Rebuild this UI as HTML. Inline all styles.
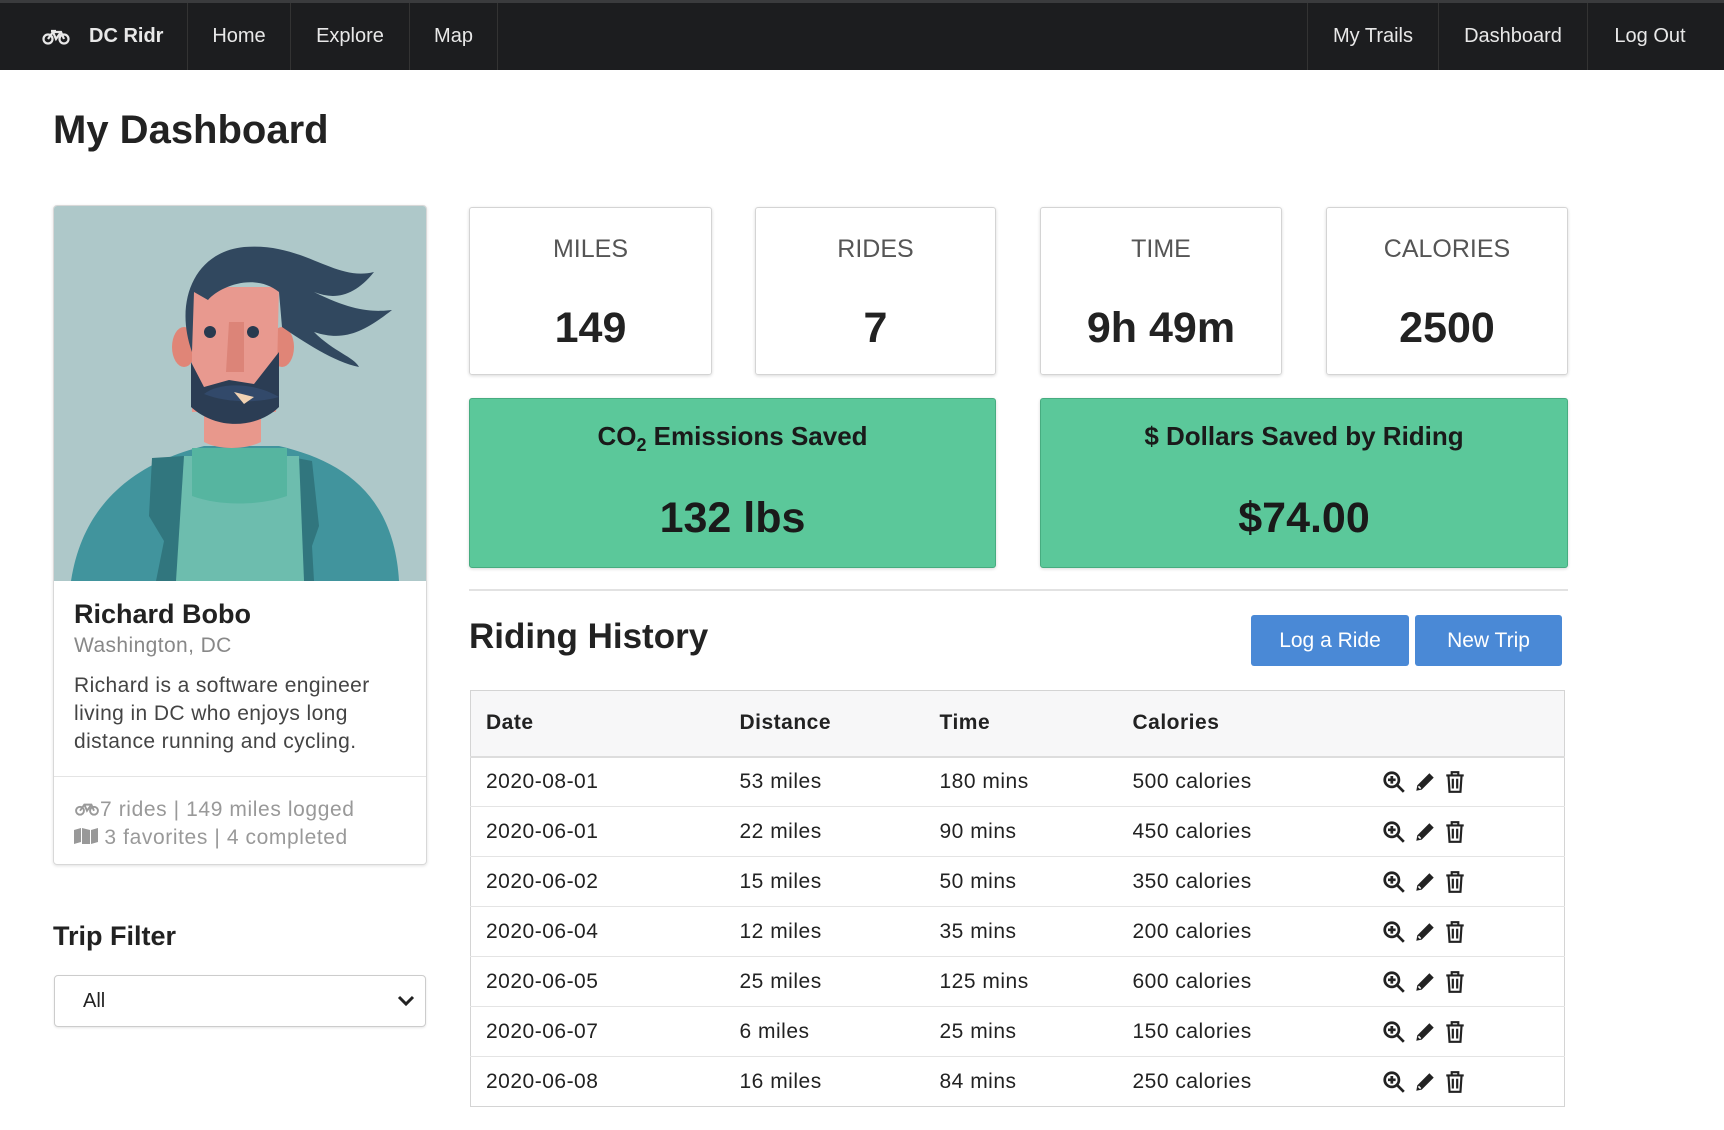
<!DOCTYPE html>
<html><head><meta charset="utf-8"><style>
*{box-sizing:border-box;margin:0;padding:0}
body{width:1724px;height:1130px;overflow:hidden;background:#fff;font-family:"Liberation Sans",sans-serif;color:#222;position:relative}
.nav{position:absolute;left:0;top:0;width:1724px;height:70px;background:#1c1d1f;border-top:3px solid #3a3b3d}
.nav .it{position:absolute;top:0;height:67px;line-height:67px;color:#e8e8e8;font-size:20px;text-align:center;border-left:1px solid #333}
.a{position:absolute}
.card{position:absolute;left:53px;top:205px;width:374px;height:660px;border:1px solid #d8d8d8;border-radius:4px;overflow:hidden;box-shadow:0 1px 3px rgba(0,0,0,.12)}
.stat{position:absolute;top:207px;height:168px;border:1px solid #d4d4d4;border-radius:3px;box-shadow:0 1px 3px rgba(0,0,0,.15);text-align:center}
.stat .l{position:absolute;top:27px;width:100%;font-size:25px;color:#555}
.stat .n{position:absolute;top:96px;width:100%;font-size:43px;font-weight:bold;color:#222}
.green{position:absolute;top:398px;height:170px;background:#5bc89a;border:1px solid #47ac80;border-radius:3px;text-align:center;box-shadow:0 1px 3px rgba(0,0,0,.15)}
.green .l{position:absolute;top:22px;width:100%;font-size:26px;font-weight:bold;color:#1a1a1a}
.green .n{position:absolute;top:95px;width:100%;font-size:43px;font-weight:bold;color:#1a1a1a}
.btn{position:absolute;top:615px;height:51px;background:#4a89d6;border-radius:3px;color:#fff;font-size:21px;line-height:51px;text-align:center}
table{position:absolute;left:470px;top:690px;width:1095px;border-collapse:collapse;border:1px solid #d4d4d4;font-size:21px;letter-spacing:.5px}
th{background:#f7f7f8;height:66px;text-align:left;font-weight:bold;padding-left:15px;border-bottom:2px solid #ddd}
td{height:50px;padding-left:15px;border-top:1px solid #e4e4e4;color:#222}
td svg{vertical-align:middle;margin-right:7px}
</style></head><body>
<div class="nav">
 <div class="it" style="left:0;width:187px;border:none;font-weight:bold">
  <svg width="28" height="16" viewBox="0 0 28 16" style="position:absolute;left:42px;top:26px" fill="none" stroke="#e8e8e8" stroke-width="2.2"><circle cx="6" cy="10" r="4.5"/><circle cx="22" cy="10" r="4.5"/><path d="M6 10l5-7h8l3 7M11 3l3 7 5-7M9 2h5"/></svg>
  <span style="position:absolute;left:89px">DC Ridr</span></div>
 <div class="it" style="left:187px;width:103px">Home</div>
 <div class="it" style="left:290px;width:119px">Explore</div>
 <div class="it" style="left:409px;width:89px;border-right:1px solid #333">Map</div>
 <div class="it" style="left:1307px;width:131px">My Trails</div>
 <div class="it" style="left:1438px;width:149px">Dashboard</div>
 <div class="it" style="left:1587px;width:125px">Log Out</div>
</div>
<div class="a" style="left:53px;top:108px;font-size:40px;font-weight:bold;color:#222">My Dashboard</div>

<div class="card">
 <svg width="374" height="375" viewBox="0 0 374 375" style="display:block">
  <rect width="374" height="375" fill="#aec8c9"/>
  <path d="M17 375C30 290 90 255 150 240L225 240C290 255 340 290 345 375Z" fill="#41949d"/>
  <path d="M98 252L95 310L110 335L102 375H133L130 250ZM232 250L240 340L232 375H260L258 340L265 320L258 255Z" fill="#31767e"/>
  <path d="M130 250H245L250 375H122Z" fill="#6dbdae"/>
  <path d="M138 242H233V290C205 300 165 300 138 290Z" fill="#56b5a0"/>
  <g transform="translate(0,-14)">
  <path d="M150 215H207V250C190 258 165 258 150 250Z" fill="#e8988c"/>
  <ellipse cx="130" cy="155" rx="12" ry="20" fill="#e08577"/>
  <ellipse cx="228" cy="155" rx="12" ry="20" fill="#e08577"/>
  <path d="M138 95H225L222 220H138Z" fill="#e8998f"/>
  <path d="M175 130H190L190 180H172Z" fill="#dc8478"/>
  <circle cx="156" cy="140" r="6" fill="#283a4f"/><circle cx="199" cy="140" r="6" fill="#283a4f"/>
  <path d="M137 170L150 195L175 188L200 192L225 160L225 215C205 235 165 240 137 215Z" fill="#2b3d54"/>
  <path d="M150 202C165 190 200 190 225 205C200 212 170 210 150 202Z" fill="#32496a"/>
  <path d="M180 200L200 205L190 212Z" fill="#f1d2b3"/>
  <path d="M138 160C120 110 140 60 190 55C250 50 280 90 320 80C300 105 280 108 260 100C300 120 320 120 338 118C310 140 290 150 260 140C280 160 300 165 305 175C280 170 250 150 228 135L225 100C200 80 165 95 154 108L140 100Z" fill="#31485f"/>
  </g>
 </svg>
 <div class="a" style="left:20px;top:393px;font-size:27px;font-weight:bold;color:#222">Richard Bobo</div>
 <div class="a" style="left:20px;top:428px;font-size:21px;color:#888;letter-spacing:.4px">Washington, DC</div>
 <div class="a" style="left:20px;top:466px;width:345px;font-size:21px;line-height:28px;color:#444;letter-spacing:.4px">Richard is a software engineer living in DC who enjoys long distance running and cycling.</div>
 <div class="a" style="left:0;top:570px;width:374px;border-top:1px solid #e4e4e4"></div>
 <div class="a" style="left:20px;top:590px;font-size:21px;line-height:28px;color:#999;letter-spacing:.6px">
  <svg width="26" height="14" viewBox="0 0 28 16" fill="none" stroke="#999" stroke-width="2.2"><circle cx="6" cy="10" r="4.5"/><circle cx="22" cy="10" r="4.5"/><path d="M6 10l5-7h8l3 7M11 3l3 7 5-7"/></svg>7 rides | 149 miles logged<br>
  <svg width="24" height="16" viewBox="0 0 24 16" fill="#999"><path d="M0 2l7-2v14l-7 2zM8 0l8 2v16l-8-2zM17 2l7-2v14l-7 2z"/></svg> 3 favorites | 4 completed</div>
</div>

<div class="a" style="left:53px;top:921px;font-size:27px;font-weight:bold">Trip Filter</div>
<div class="a" style="left:54px;top:975px;width:372px;height:52px;border:1px solid #ccc;border-radius:4px;font-size:20px;line-height:50px;padding-left:28px;box-shadow:0 1px 2px rgba(0,0,0,.1)">All
 <svg width="18" height="12" viewBox="0 0 18 12" style="position:absolute;right:10px;top:19px" fill="none" stroke="#222" stroke-width="3"><path d="M2 2l7 7 7-7"/></svg></div>

<div class="stat" style="left:469px;width:243px"><div class="l">MILES</div><div class="n">149</div></div>
<div class="stat" style="left:755px;width:241px"><div class="l">RIDES</div><div class="n">7</div></div>
<div class="stat" style="left:1040px;width:242px"><div class="l">TIME</div><div class="n">9h 49m</div></div>
<div class="stat" style="left:1326px;width:242px"><div class="l">CALORIES</div><div class="n">2500</div></div>
<div class="green" style="left:469px;width:527px"><div class="l">CO<sub style="font-size:18px">2</sub> Emissions Saved</div><div class="n">132 lbs</div></div>
<div class="green" style="left:1040px;width:528px"><div class="l">$ Dollars Saved by Riding</div><div class="n">$74.00</div></div>
<div class="a" style="left:469px;top:589px;width:1099px;border-top:2px solid #e2e2e2"></div>
<div class="a" style="left:469px;top:617px;font-size:35px;font-weight:bold;color:#222">Riding History</div>
<div class="btn" style="left:1251px;width:158px">Log a Ride</div>
<div class="btn" style="left:1415px;width:147px">New Trip</div>

<table>
<tr><th style="width:254px">Date</th><th style="width:200px">Distance</th><th style="width:193px">Time</th><th style="width:252px">Calories</th><th></th></tr>
<tr><td>2020-08-01</td><td>53 miles</td><td>180 mins</td><td>500 calories</td><td class="ic"></td></tr>
<tr><td>2020-06-01</td><td>22 miles</td><td>90 mins</td><td>450 calories</td><td class="ic"></td></tr>
<tr><td>2020-06-02</td><td>15 miles</td><td>50 mins</td><td>350 calories</td><td class="ic"></td></tr>
<tr><td>2020-06-04</td><td>12 miles</td><td>35 mins</td><td>200 calories</td><td class="ic"></td></tr>
<tr><td>2020-06-05</td><td>25 miles</td><td>125 mins</td><td>600 calories</td><td class="ic"></td></tr>
<tr><td>2020-06-07</td><td>6 miles</td><td>25 mins</td><td>150 calories</td><td class="ic"></td></tr>
<tr><td>2020-06-08</td><td>16 miles</td><td>84 mins</td><td>250 calories</td><td class="ic"></td></tr>
</table>
<script>
var ic='<svg width="24" height="24" viewBox="0 0 22 22" fill="none" stroke="#222" stroke-width="2.5"><circle cx="9" cy="9" r="6.5"/><path d="M14 14l6 6M9 5.5v7M5.5 9h7"/></svg><svg width="24" height="24" viewBox="0 0 22 22"><path d="M3 19l1-5L15 3l4 4L8 18z" fill="#222"/><path d="M5 15l2 2" stroke="#fff" stroke-width="1.5"/></svg><svg width="22" height="24" viewBox="0 0 20 22" fill="none" stroke="#222" stroke-width="2"><path d="M2 5h16M7 5V2h6v3M4 5l1 15h10l1-15M8 8v9M12 8v9"/></svg>';
document.querySelectorAll('.ic').forEach(function(e){e.innerHTML=ic;e.style.paddingLeft='12px'});
</script>
</body></html>
